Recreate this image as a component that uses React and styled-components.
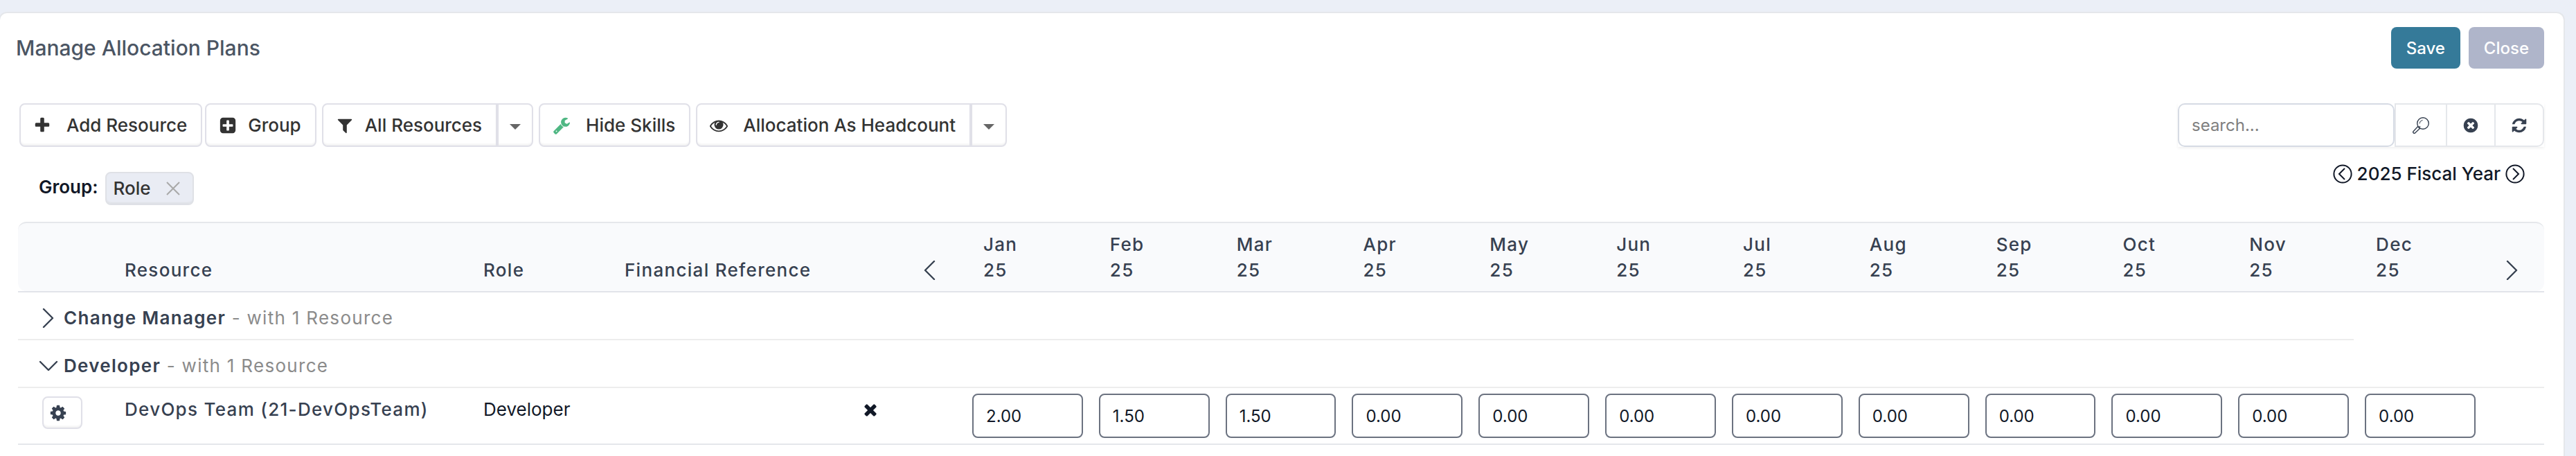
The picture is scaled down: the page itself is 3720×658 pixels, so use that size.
import React, { useState } from 'react';
import styled, { createGlobalStyle } from 'styled-components';

const GlobalStyle = createGlobalStyle`
  * {
    box-sizing: border-box;
  }

  body {
    margin: 0;
    background: #ebeff7;
    color: #111827;
    font-family: Inter, 'Liberation Sans', sans-serif;
    font-size: 26px;
    line-height: 37px;
  }

  button,
  input {
    margin: 0;
    font-family: inherit;
  }

  button {
    cursor: pointer;
  }

  svg {
    flex-shrink: 0;
  }
`;

// The left edge of the panel is tucked under the side of the window
const Panel = styled.main`
  margin: 17px 16px 0 -2px;
  min-height: calc(100vh - 17px);
  padding: 20px 28px 0 26px;
  background: #fff;
  border: 2px solid #e5e7eb;
  border-bottom: 0;
  border-radius: 12px 12px 0 0;
`;

const Header = styled.header`
  display: flex;
  align-items: center;
  justify-content: space-between;
`;

const Title = styled.h1`
  margin: 0 0 0 -3px;
  color: #4b5563;
  font-size: 30px;
  font-weight: 500;
`;

const Actions = styled.div`
  display: flex;
  gap: 12px;
`;

const ActionButton = styled.button`
  height: 60px;
  padding: 0 22px;
  color: #fff;
  background: ${({ $primary }) => ($primary ? '#357a99' : '#afb5ca')};
  border: 0;
  border-radius: 8px;
  font-size: 24px;
  font-weight: 500;
`;

const Toolbar = styled.div`
  display: flex;
  flex-wrap: wrap;
  justify-content: space-between;
  gap: 16px;
  margin-top: 50px;
  padding-left: 2px;
`;

const ToolGroup = styled.div`
  display: flex;
  gap: ${({ $gap }) => $gap || 0}px;
`;

const ToolButton = styled.button`
  display: flex;
  align-items: center;
  gap: ${({ $gap }) => $gap || 16}px;
  height: 63px;
  padding: 0 20px 0 18px;
  color: #333;
  background: #fff;
  border: 2px solid #e0e0e8;
  border-radius: ${({ $split }) => ($split ? '8px 0 0 8px' : '8px')};
  box-shadow: inset 0 -3px 3px -1px rgba(0, 0, 0, 0.06);
  font-size: 26px;
  font-weight: 500;
  white-space: nowrap;
`;

const CaretButton = styled(ToolButton)`
  padding: 4px 16px 0;
  color: #666;
  border-radius: 0 8px 8px 0;
`;

const Search = styled.form`
  display: flex;
  height: 63px;
  box-shadow: 0 2px 4px rgba(0, 0, 0, 0.06);
`;

const SearchInput = styled.input`
  width: 313px;
  padding: 0 16px 0 18px;
  color: #111827;
  background: #fff;
  border: 2px solid #d6dbe4;
  border-radius: 10px;
  font-size: 24px;

  &::placeholder {
    color: #808080;
  }
`;

const SearchButton = styled.button`
  display: flex;
  align-items: center;
  padding: 0 ${({ $wide }) => ($wide ? 24 : 22)}px;
  color: #374151;
  background: #fff;
  border: 2px solid #e5e7eb;
  border-right-width: 0;

  &:last-child {
    border-right-width: 2px;
    border-radius: 0 10px 10px 0;
  }
`;

const SubBar = styled.div`
  display: flex;
  justify-content: space-between;
  align-items: flex-start;
  padding: 20px 28px 24px 30px;
`;

const Grouping = styled.div`
  display: flex;
  gap: 10px;
  padding-top: 16px;
  line-height: 44px;
`;

const GroupLabel = styled.span`
  font-weight: 600;
`;

const Chip = styled.span`
  display: flex;
  gap: 22px;
  padding: 0 18px 0 10px;
  color: #333;
  background: #e9ecf4;
  border: 2px solid #dfe1e6;
  border-radius: 8px;
  box-shadow: inset 0 -3px 2px -1px #dfe1e6;
  font-weight: 500;
`;

const PlainButton = styled.button`
  display: flex;
  align-items: center;
  justify-content: center;
  padding: 0;
  color: inherit;
  background: none;
  border: 0;
`;

const FiscalYear = styled.div`
  display: flex;
  align-items: center;
  gap: 7px;
  font-weight: 500;
`;

const Table = styled.table`
  width: 100%;
  table-layout: fixed;
  border-collapse: separate;
  border-spacing: 0;
`;

const Col = styled.col`
  width: ${({ $width }) => ($width ? `${$width}px` : 'auto')};
`;

const HeadCell = styled.th`
  padding: 12px 0 12px 32px;
  color: #374151;
  background: #f9fafc;
  border-top: 2px solid #e5e7eb;
  font-weight: 500;
  letter-spacing: 0.05em;
  text-align: left;
  vertical-align: bottom;

  &:first-child {
    border-radius: 12px 0 0 12px;
  }

  &:last-child {
    border-radius: 0 12px 12px 0;
  }
`;

const PageButton = styled(PlainButton)`
  width: 28px;
  height: 37px;
  margin-left: ${({ $end }) => ($end ? 'auto' : '0')};
  margin-right: ${({ $end }) => ($end ? '32px' : '0')};
`;

const GroupCell = styled.td`
  padding: 18px 30px 12px;
  border-top: ${({ $first }) => ($first ? '2px solid #e2e4ea' : '0')};
  border-bottom: ${({ $open }) => ($open ? '0' : '2px solid #ededed')};
`;

const GroupRow = styled.div`
  display: flex;
  align-items: center;
  gap: 8px;
  height: 37px;
  color: #374151;
  letter-spacing: 0.05em;
  white-space: pre;
`;

const Toggle = styled(PlainButton)`
  width: 28px;
  height: 28px;
  color: #374151;
`;

const GroupName = styled.span`
  font-weight: 600;
`;

const GroupCount = styled.span`
  color: #8b8b8b;
`;

const Cell = styled.td`
  padding: 12px 0 8px 32px;
  border-bottom: 2px solid #e5e7eb;
  vertical-align: top;
`;

const SettingsCell = styled(Cell)`
  padding-left: 35px;
`;

const NameCell = styled(Cell)`
  color: #374151;
  font-weight: 500;
  letter-spacing: 0.05em;
  white-space: nowrap;
`;

const MonthCell = styled(Cell)`
  padding: 8px 7px 8px 16px;
`;

const SettingsButton = styled(ToolButton)`
  height: 47px;
  padding: 0 20px 0 8px;
  color: #374151;
`;

const RemoveButton = styled(PlainButton)`
  height: 37px;
`;

const MonthInput = styled.input`
  display: block;
  width: 100%;
  height: 64px;
  padding: 0 18px;
  color: #111827;
  background: #fff;
  border: 2px solid #6b7280;
  border-radius: 8px;
  font-size: 24px;
`;

const ICONS = {
  plus: 'M1600 736v192q0 40-28 68t-68 28h-416v416q0 40-28 68t-68 28h-192q-40 0-68-28t-28-68v-416h-416q-40 0-68-28t-28-68v-192q0-40 28-68t68-28h416v-416q0-40 28-68t68-28h192q40 0 68 28t28 68v416h416q40 0 68 28t28 68z',
  plusSquare:
    'M1408 960v-128q0-26-19-45t-45-19h-320v-320q0-26-19-45t-45-19h-128q-26 0-45 19t-19 45v320h-320q-26 0-45 19t-19 45v128q0 26 19 45t45 19h320v320q0 26 19 45t45 19h128q26 0 45-19t19-45v-320h320q26 0 45-19t19-45zm256-544v960q0 119-84.5 203.5t-203.5 84.5h-960q-119 0-203.5-84.5t-84.5-203.5v-960q0-119 84.5-203.5t203.5-84.5h960q119 0 203.5 84.5t84.5 203.5z',
  filter:
    'M1595 295q17 41-14 70l-493 493v742q0 42-39 59-13 5-25 5-27 0-45-19l-256-256q-19-19-19-45v-486l-493-493q-31-29-14-70 17-39 59-39h1280q42 0 59 39z',
  wrench:
    'M448 1472q0-26-19-45t-45-19-45 19-19 45 19 45 45 19 45-19 19-45zm644-420l-682 682q-37 37-90 37-52 0-91-37l-106-108q-38-36-38-90 0-53 38-91l681-681q39 98 114.5 173.5t173.5 114.5zm634-435q0 39-23 106-47 134-164.5 217.5t-258.5 83.5q-185 0-316.5-131.5t-131.5-316.5 131.5-316.5 316.5-131.5q58 0 121.5 16.5t107.5 46.5q16 11 16 28t-16 28l-293 169v224l193 107q5-3 79-48.5t135.5-81 70.5-35.5q15 0 23.5 10t8.5 25z',
  eye: 'M1664 960q-152-236-381-353 61 104 61 225 0 185-131.5 316.5t-316.5 131.5-316.5-131.5-131.5-316.5q0-121 61-225-229 117-381 353 133 205 333.5 326.5t434.5 121.5 434.5-121.5 333.5-326.5zm-720-384q0-20-14-34t-34-14q-125 0-214.5 89.5t-89.5 214.5q0 20 14 34t34 14 34-14 14-34q0-86 61-147t147-61q20 0 34-14t14-34zm848 384q0 34-20 69-140 230-376.5 368.5t-499.5 138.5-499.5-139-376.5-368q-20-35-20-69t20-69q140-229 376.5-368t499.5-139 499.5 139 376.5 368q20 35 20 69z',
  timesCircle:
    'M1277 1122q0-26-19-45l-181-181 181-181q19-19 19-45 0-27-19-46l-90-90q-19-19-46-19-26 0-45 19l-181 181-181-181q-19-19-45-19-27 0-46 19l-90 90q-19 19-19 46 0 26 19 45l181 181-181 181q-19 19-19 45 0 27 19 46l90 90q19 19 46 19 26 0 45-19l181-181 181 181q19 19 45 19 27 0 46-19l90-90q19-19 19-46zm387-226q0 209-103 385.5t-279.5 279.5-385.5 103-385.5-103-279.5-279.5-103-385.5 103-385.5 279.5-279.5 385.5-103 385.5 103 279.5 279.5 103 385.5z',
  refresh:
    'M1639 1056q0 5-1 7-64 268-268 434.5t-478 166.5q-146 0-282.5-55t-243.5-157l-129 129q-19 19-45 19t-45-19-19-45v-448q0-26 19-45t45-19h448q26 0 45 19t19 45-19 45l-137 137q71 66 161 102t187 36q134 0 250-65t186-179q11-17 53-117 8-23 30-23h192q13 0 22.5 9.5t9.5 22.5zm25-800v448q0 26-19 45t-45 19h-448q-26 0-45-19t-19-45 19-45l138-138q-148-137-349-137-134 0-250 65t-186 179q-11 17-53 117-8 23-30 23h-199q-13 0-22.5-9.5t-9.5-22.5v-7q65-268 270-434.5t480-166.5q146 0 284 55.5t245 156.5l130-129q19-19 45-19t45 19 19 45z',
  cog: 'M1152 896q0-106-75-181t-181-75-181 75-75 181 75 181 181 75 181-75 75-181zm512-109v222q0 12-8 23t-20 13l-185 28q-19 54-39 91 35 50 107 138 10 12 10 25t-9 23q-27 37-99 108t-94 71q-12 0-26-9l-138-108q-44 23-91 38-16 136-29 186-7 28-36 28h-222q-14 0-24.5-8.5t-11.5-21.5l-28-184q-49-16-90-37l-141 107q-10 9-25 9-14 0-25-11-126-114-165-168-7-10-7-23 0-12 8-23 15-21 51-66.5t54-70.5q-27-50-41-99l-183-27q-13-2-21-12.5t-8-23.5v-222q0-12 8-23t19-13l186-28q14-46 39-92-40-57-107-138-10-12-10-24 0-10 9-23 26-36 98.5-107.5t94.5-71.5q13 0 26 10l138 107q44-23 91-38 16-136 29-186 7-28 36-28h222q14 0 24.5 8.5t11.5 21.5l28 184q49 16 90 37l142-107q9-9 24-9 13 0 25 10 129 119 165 170 7 8 7 22 0 12-8 23-15 21-51 66.5t-54 70.5q26 50 41 98l183 28q13 2 21 12.5t8 23.5z',
  times:
    'M1490 1322q0 40-28 68l-136 136q-28 28-68 28t-68-28l-294-294-294 294q-28 28-68 28t-68-28l-136-136q-28-28-28-68t28-68l294-294-294-294q-28-28-28-68t28-68l136-136q28-28 68-28t68 28l294 294 294-294q28-28 68-28t68 28l136 136q28 28 28 68t-28 68l-294 294 294 294q28 28 28 68z',
};

const Icon = ({ name, size = 26, color = 'currentColor' }) => (
  <svg width={size} height={size} viewBox="0 0 1792 1792" fill={color}>
    <path d={ICONS[name]} />
  </svg>
);

const Caret = () => (
  <svg width="16" height="8" viewBox="0 0 16 8" fill="currentColor">
    <path d="M0 0h16L8 8z" />
  </svg>
);

const CHEVRONS = {
  left: 'M21 1L8 14l13 13',
  right: 'M7 1l13 13L7 27',
  down: 'M2 8l12 12L26 8',
};

const Chevron = ({ to }) => (
  <svg
    width="28"
    height="28"
    viewBox="0 0 28 28"
    fill="none"
    stroke="currentColor"
    strokeWidth="2.4"
    strokeLinecap="round"
    strokeLinejoin="round"
  >
    <path d={CHEVRONS[to]} />
  </svg>
);

const CircleArrow = ({ to }) => (
  <svg
    width="28"
    height="28"
    viewBox="0 0 28 28"
    fill="none"
    stroke="currentColor"
    strokeWidth="2"
  >
    <circle cx="14" cy="14" r="12.6" />
    <path d={to === 'left' ? 'M17 6l-8 8 8 8' : 'M11 6l8 8-8 8'} />
  </svg>
);

const Magnifier = () => (
  <svg
    width="24"
    height="24"
    viewBox="0 0 24 24"
    fill="none"
    stroke="currentColor"
    strokeWidth="1.4"
    strokeLinecap="round"
  >
    <circle cx="15" cy="9" r="8.3" />
    <path d="M10 9a5.2 5.2 0 0 1 4.2-4.6" strokeWidth="1" />
    <path d="M7.6 13.6l-6.4 6.8a1.7 1.7 0 0 0 2.5 2.4l6.7-6.4M7.6 13.6l2.8 2.8M9.2 15l1.4-1.4" />
  </svg>
);

const Cross = () => (
  <svg
    width="20"
    height="20"
    viewBox="0 0 20 20"
    fill="none"
    stroke="#a9a9a9"
    strokeWidth="2"
  >
    <path d="M1 1l18 18M19 1L1 19" />
  </svg>
);

const MONTHS = [
  'Jan',
  'Feb',
  'Mar',
  'Apr',
  'May',
  'Jun',
  'Jul',
  'Aug',
  'Sep',
  'Oct',
  'Nov',
  'Dec',
];

const initialPlan = MONTHS.map((_, i) => ['2.00', '1.50', '1.50'][i] || '0.00');

export default () => {
  const [keyword, setKeyword] = useState('');
  const [plan, setPlan] = useState(initialPlan);
  const [developerOpen, setDeveloperOpen] = useState(true);

  const changeMonth = (index, value) =>
    setPlan(plan.map((old, i) => (i === index ? value : old)));

  return (
    <>
      <GlobalStyle />
      <Panel>
        <Header>
          <Title>Manage Allocation Plans</Title>
          <Actions>
            <ActionButton $primary>Save</ActionButton>
            <ActionButton>Close</ActionButton>
          </Actions>
        </Header>

        <Toolbar>
          <ToolGroup $gap={8}>
            <ToolGroup $gap={4}>
              <ToolButton $gap={22}>
                <Icon name="plus" />
                Add Resource
              </ToolButton>
              <ToolButton>
                <Icon name="plusSquare" />
                Group
              </ToolButton>
            </ToolGroup>
            <ToolGroup>
              <ToolButton $split>
                <Icon name="filter" />
                All Resources
              </ToolButton>
              <CaretButton aria-label="Choose resources">
                <Caret />
              </CaretButton>
            </ToolGroup>
            <ToolButton $gap={22}>
              <Icon name="wrench" color="#4fb783" />
              Hide Skills
            </ToolButton>
            <ToolGroup>
              <ToolButton $split $gap={22}>
                <Icon name="eye" />
                Allocation As Headcount
              </ToolButton>
              <CaretButton aria-label="Choose allocation unit">
                <Caret />
              </CaretButton>
            </ToolGroup>
          </ToolGroup>

          <Search onSubmit={(e) => e.preventDefault()}>
            <SearchInput
              type="text"
              aria-label="Search"
              placeholder="search..."
              value={keyword}
              onChange={({ target }) => setKeyword(target.value)}
            />
            <SearchButton $wide aria-label="Search">
              <Magnifier />
            </SearchButton>
            <SearchButton
              type="button"
              aria-label="Clear search"
              onClick={() => setKeyword('')}
            >
              <Icon name="timesCircle" size={24} />
            </SearchButton>
            <SearchButton type="button" aria-label="Refresh">
              <Icon name="refresh" size={24} />
            </SearchButton>
          </Search>
        </Toolbar>

        <SubBar>
          <Grouping>
            <GroupLabel>Group:</GroupLabel>
            <Chip>
              Role
              <PlainButton aria-label="Remove grouping">
                <Cross />
              </PlainButton>
            </Chip>
          </Grouping>
          <FiscalYear>
            <PlainButton aria-label="Previous year">
              <CircleArrow to="left" />
            </PlainButton>
            2025 Fiscal Year
            <PlainButton aria-label="Next year">
              <CircleArrow to="right" />
            </PlainButton>
          </FiscalYear>
        </SubBar>

        <Table>
          <colgroup>
            <Col $width={122} />
            <Col $width={518} />
            <Col $width={204} />
            <Col $width={342} />
            <Col $width={176} />
            {MONTHS.map((month) => (
              <Col key={month} />
            ))}
            <Col $width={92} />
          </colgroup>
          <thead>
            <tr>
              <HeadCell />
              <HeadCell>Resource</HeadCell>
              <HeadCell>Role</HeadCell>
              <HeadCell>Financial Reference</HeadCell>
              <HeadCell>
                <PageButton $end aria-label="Earlier months">
                  <Chevron to="left" />
                </PageButton>
              </HeadCell>
              {MONTHS.map((month) => (
                <HeadCell key={month}>
                  {month}
                  <br />
                  25
                </HeadCell>
              ))}
              <HeadCell>
                <PageButton aria-label="Later months">
                  <Chevron to="right" />
                </PageButton>
              </HeadCell>
            </tr>
          </thead>
          <tbody>
            <tr>
              <GroupCell colSpan={16} $first>
                <GroupRow>
                  <Toggle aria-label="Expand Change Manager">
                    <Chevron to="right" />
                  </Toggle>
                  <span>
                    <GroupName>Change Manager</GroupName>
                    <GroupCount> - with 1 Resource</GroupCount>
                  </span>
                </GroupRow>
              </GroupCell>
              <GroupCell colSpan={2} $first $open />
            </tr>
            <tr>
              <GroupCell colSpan={18}>
                <GroupRow>
                  <Toggle
                    aria-label="Toggle Developer"
                    onClick={() => setDeveloperOpen(!developerOpen)}
                  >
                    <Chevron to={developerOpen ? 'down' : 'right'} />
                  </Toggle>
                  <span>
                    <GroupName>Developer</GroupName>
                    <GroupCount> - with 1 Resource</GroupCount>
                  </span>
                </GroupRow>
              </GroupCell>
            </tr>
            {developerOpen && (
              <tr>
                <SettingsCell>
                  <SettingsButton aria-label="Resource settings">
                    <Icon name="cog" />
                  </SettingsButton>
                </SettingsCell>
                <NameCell>DevOps Team (21-DevOpsTeam)</NameCell>
                <Cell>Developer</Cell>
                <Cell />
                <Cell>
                  <RemoveButton aria-label="Remove resource">
                    <Icon name="times" />
                  </RemoveButton>
                </Cell>
                {MONTHS.map((month, index) => (
                  <MonthCell key={month}>
                    <MonthInput
                      type="text"
                      aria-label={`${month} 25`}
                      value={plan[index]}
                      onChange={({ target }) =>
                        changeMonth(index, target.value)
                      }
                    />
                  </MonthCell>
                ))}
                <Cell />
              </tr>
            )}
          </tbody>
        </Table>
      </Panel>
    </>
  );
};
